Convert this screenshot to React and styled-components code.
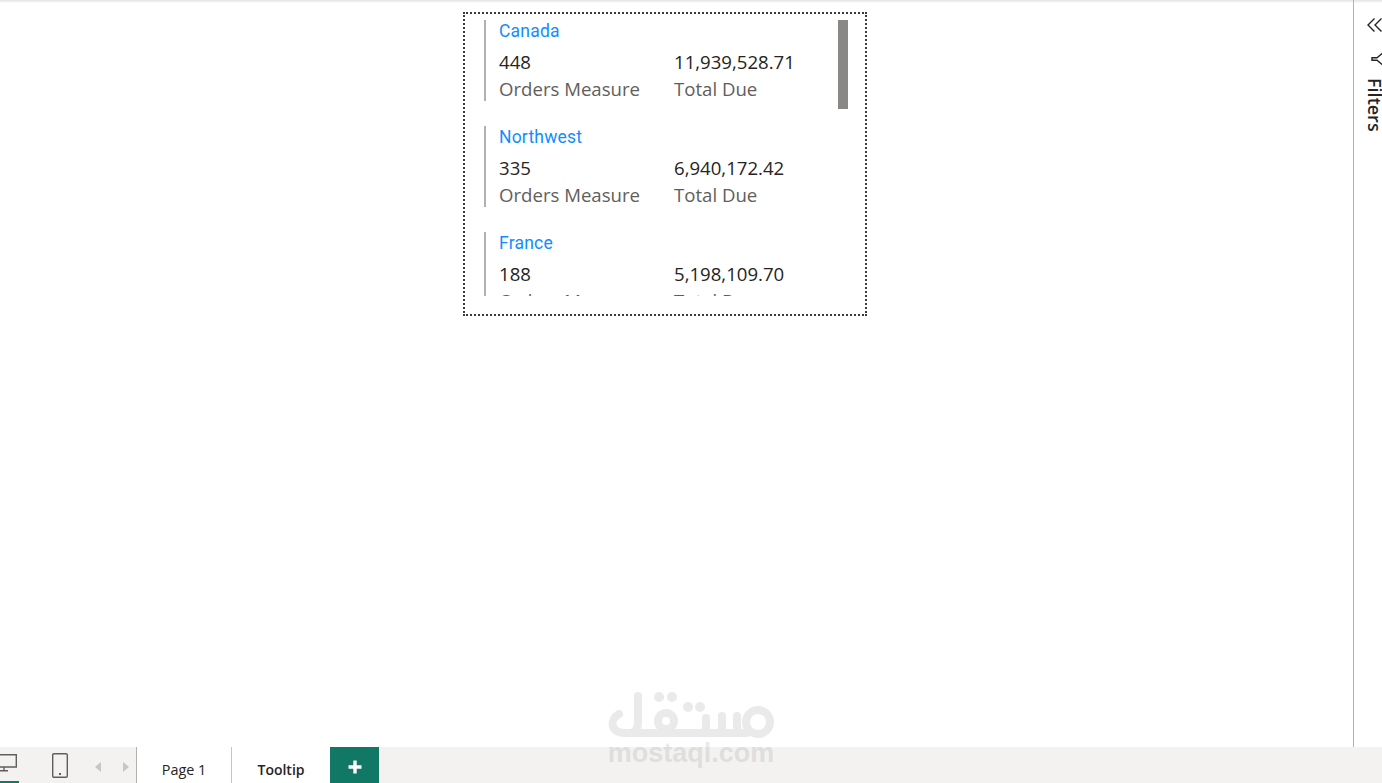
import styled, { createGlobalStyle } from "styled-components";

const rows = [
  { id: "ca", name: "Canada", orders: "448", due: "11,939,528.71" },
  { id: "nw", name: "Northwest", orders: "335", due: "6,940,172.42" },
  { id: "fr", name: "France", orders: "188", due: "5,198,109.70" },
];

const App = () => {
  return (
    <Page>
      <GlobalStyle />
      <Main>
        <Canvas>
          <Visual>
            <CardList>
              {rows.map((row) => (
                <Card key={row.id}>
                  <CardTitle>{row.name}</CardTitle>
                  <Metrics>
                    <Value>{row.orders}</Value>
                    <Value>{row.due}</Value>
                    <Label>Orders Measure</Label>
                    <Label>Total Due</Label>
                  </Metrics>
                </Card>
              ))}
            </CardList>
            <ScrollThumb />
          </Visual>
        </Canvas>
        <FilterPane>
          <CollapseIcon viewBox="0 0 15 14">
            <path d="M7.5 0.5 L1 7 L7.5 13.5 M14.5 0.5 L8 7 L14.5 13.5" />
          </CollapseIcon>
          <FunnelIcon viewBox="0 0 12 14">
            <path d="M12 0.8 L6 5.8 L1 5.8 L1 8.2 L6 8.2 L12 13.2" />
          </FunnelIcon>
          <FilterLabel>Filters</FilterLabel>
        </FilterPane>
      </Main>
      <TabBar>
        <ViewTools>
          <DeviceButton $active>
            <svg width="19" height="20" viewBox="0 0 19 20" fill="none" stroke="#605e5c" strokeWidth="1.4">
              <path d="M-4 1.7 H16.3 V14 H-4 M4 14 V17.5 M0 17.7 H8" />
            </svg>
          </DeviceButton>
          <PhoneIcon width="16" height="25" viewBox="0 0 16 25">
            <rect x="0.7" y="0.7" width="14.6" height="23.6" rx="1.2" />
            <rect className="dot" x="7" y="20" width="2" height="2" />
          </PhoneIcon>
          <PageArrow viewBox="0 0 6 10">
            <path d="M6 0 V10 L0 5 Z" />
          </PageArrow>
          <PageArrow viewBox="0 0 6 10" $next>
            <path d="M0 0 V10 L6 5 Z" />
          </PageArrow>
        </ViewTools>
        <PageTab>Page 1</PageTab>
        <PageTab $current>Tooltip</PageTab>
        <AddTab>
          <svg width="14" height="14" viewBox="0 0 14 14" fill="#fff">
            <path d="M5.3 0.5 H8.7 V5.3 H13.5 V8.7 H8.7 V13.5 H5.3 V8.7 H0.5 V5.3 H5.3 Z" />
          </svg>
        </AddTab>
      </TabBar>
      <Watermark>
        <svg width="170" height="52" viewBox="0 0 170 52" fill="none" stroke="#000" strokeWidth="8" strokeLinecap="round">
          <path d="M13 26 C3 32 4 45 20 45 H141" />
          <path d="M32 8 V34 C32 41 29 45 24 45" />
          <circle cx="60" cy="33" r="8" />
          <path d="M100 30 V43 M116 28 V43 M131 28 V43" />
          <circle cx="152" cy="34" r="12" />
          <g fill="#000" stroke="none">
            <circle cx="53" cy="9" r="5" />
            <circle cx="66" cy="9" r="5" />
            <circle cx="82" cy="19" r="5" />
            <circle cx="94" cy="19" r="5" />
          </g>
        </svg>
        <WatermarkText>mostaql.com</WatermarkText>
      </Watermark>
    </Page>
  );
};

const GlobalStyle = createGlobalStyle`
  html,
  body {
    margin: 0;
    padding: 0;
    background: #fff;
  }
`;

const Page = styled.div`
  position: relative;
  display: flex;
  flex-direction: column;
  width: 1382px;
  height: 783px;
  overflow: hidden;
  font-family: "Open Sans", "Noto Sans", sans-serif;
  color: #252423;
`;

const Main = styled.div`
  flex: 1;
  display: flex;
  min-height: 0;
  background: linear-gradient(#e2e2e2, #f3f3f3 2px, #fff 3px);
`;

const Canvas = styled.div`
  flex: 1;
  padding: 12px 0 0 463px;
`;

const Visual = styled.div`
  position: relative;
  box-sizing: border-box;
  width: 404px;
  height: 304px;
  padding: 6px 0 0 19px;
  border: 2px dotted #3b3a39;
`;

const CardList = styled.div`
  display: flex;
  flex-direction: column;
  gap: 25px;
  height: 276px;
  overflow: hidden;
`;

const Card = styled.div`
  flex: none;
  box-sizing: border-box;
  height: 81px;
  padding-left: 13px;
  border-left: 2px solid #b3b0ad;
`;

const CardTitle = styled.div`
  height: 22px;
  margin-bottom: 6px;
  font-family: Roboto, "Open Sans", sans-serif;
  font-size: 17.5px;
  font-weight: 400;
  line-height: 22px;
  letter-spacing: 0.2px;
  color: #118dff;
`;

const Metrics = styled.div`
  display: grid;
  grid-template-columns: 175px 1fr;
  grid-auto-rows: 27px;
`;

const Value = styled.div`
  font-size: 18.6px;
  line-height: 27px;
  color: #252423;
`;

const Label = styled.div`
  font-size: 18.6px;
  line-height: 27px;
  color: #605e5c;
`;

const ScrollThumb = styled.div`
  position: absolute;
  top: 6px;
  right: 17px;
  width: 10px;
  height: 89px;
  background: #8a8886;
`;

const FilterPane = styled.aside`
  flex: none;
  display: flex;
  flex-direction: column;
  box-sizing: border-box;
  width: 29px;
  padding: 18px 0 0 13px;
  overflow: hidden;
  border-left: 1px solid #b3b0ad;
`;

const CollapseIcon = styled.svg`
  flex: none;
  width: 15px;
  height: 14px;
  fill: none;
  stroke: #252423;
  stroke-width: 1.4;
`;

const FunnelIcon = styled.svg`
  flex: none;
  width: 12px;
  height: 14px;
  margin: 20px 0 0 4px;
  fill: none;
  stroke: #252423;
  stroke-width: 1.4;
`;

const FilterLabel = styled.div`
  margin-top: 12px;
  writing-mode: vertical-rl;
  font-size: 18px;
  font-weight: 600;
  line-height: 15px;
  color: #252423;
`;

const TabBar = styled.footer`
  flex: none;
  display: flex;
  height: 36px;
  background: #f3f2f1;
`;

const ViewTools = styled.div`
  flex: none;
  display: flex;
  align-items: center;
  box-sizing: border-box;
  width: 137px;
  border-right: 1px solid #b3b0ad;
`;

const DeviceButton = styled.div`
  flex: none;
  display: flex;
  align-items: center;
  box-sizing: border-box;
  width: 19px;
  height: 36px;
  padding-bottom: 2px;
  border-bottom: 2px solid ${(props) => (props.$active ? "#117865" : "transparent")};
`;

const PhoneIcon = styled.svg`
  flex: none;
  margin-left: 33px;
  fill: none;
  stroke: #605e5c;
  stroke-width: 1.4;

  .dot {
    fill: #605e5c;
    stroke: none;
  }
`;

const PageArrow = styled.svg`
  flex: none;
  width: 6px;
  height: 10px;
  margin-left: ${(props) => (props.$next ? "22px" : "27px")};
  margin-top: 3px;
  fill: #c8c6c4;
`;

const PageTab = styled.div`
  flex: none;
  display: flex;
  align-items: center;
  justify-content: center;
  box-sizing: border-box;
  width: ${(props) => (props.$current ? "98px" : "95px")};
  padding-top: 9px;
  border-right: ${(props) => (props.$current ? "none" : "1px solid #c8c6c4")};
  background: #fff;
  font-size: ${(props) => (props.$current ? "14px" : "14.4px")};
  font-weight: ${(props) => (props.$current ? 600 : 400)};
  color: #252423;
`;

const AddTab = styled.div`
  flex: none;
  display: flex;
  align-items: center;
  justify-content: center;
  width: 49px;
  padding-top: 3px;
  background: #117865;
`;

const Watermark = styled.div`
  position: absolute;
  left: 606px;
  top: 688px;
  display: flex;
  flex-direction: column;
  align-items: center;
  width: 170px;
  opacity: 0.08;
  pointer-events: none;
`;

const WatermarkText = styled.div`
  font-family: "Liberation Sans", Arial, sans-serif;
  font-size: 27px;
  font-weight: 700;
  line-height: 27px;
  color: #000;
`;

export default App;
